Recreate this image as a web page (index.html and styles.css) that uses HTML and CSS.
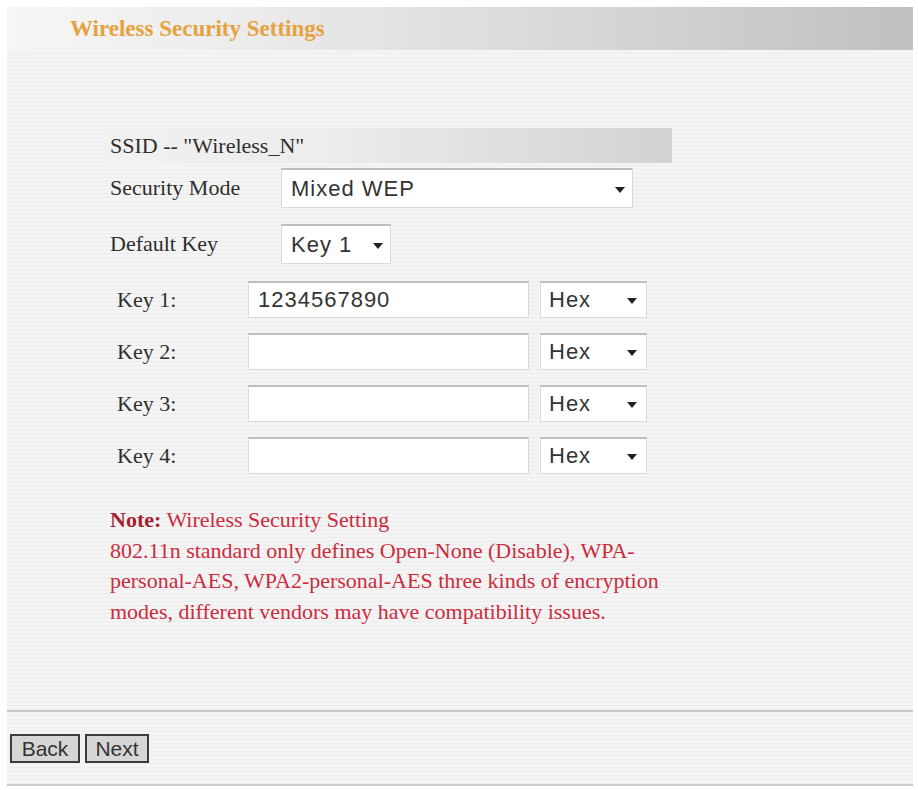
FILE: index.html
```html
<!DOCTYPE html>
<html>
<head>
<meta charset="utf-8">
<title>Wireless Security Settings</title>
<link rel="stylesheet" href="styles.css">
</head>
<body>
<div class="page">
  <div class="header"><span class="title">Wireless Security Settings</span></div>
  <div class="content">
    <div class="form">
      <div class="ssid">SSID -- "Wireless_N"</div>
      <div class="row row-mode">
        <span class="label label-wide">Security Mode</span>
        <div class="select select-mode"><span class="sel-text">Mixed WEP</span><svg class="arrow" width="10" height="6" viewBox="0 0 10 6"><path d="M0 0H10L5 6Z"/></svg></div>
      </div>
      <div class="row row-default">
        <span class="label label-wide">Default Key</span>
        <div class="select select-key"><span class="sel-text">Key 1</span><svg class="arrow" width="10" height="6" viewBox="0 0 10 6"><path d="M0 0H10L5 6Z"/></svg></div>
      </div>
      <div class="keys">
        <div class="key-row">
          <span class="label label-key">Key 1:</span>
          <input class="key-input" type="text" value="1234567890">
          <div class="select select-hex"><span class="sel-text">Hex</span><svg class="arrow" width="10" height="6" viewBox="0 0 10 6"><path d="M0 0H10L5 6Z"/></svg></div>
        </div>
        <div class="key-row">
          <span class="label label-key">Key 2:</span>
          <input class="key-input" type="text" value="">
          <div class="select select-hex"><span class="sel-text">Hex</span><svg class="arrow" width="10" height="6" viewBox="0 0 10 6"><path d="M0 0H10L5 6Z"/></svg></div>
        </div>
        <div class="key-row">
          <span class="label label-key">Key 3:</span>
          <input class="key-input" type="text" value="">
          <div class="select select-hex"><span class="sel-text">Hex</span><svg class="arrow" width="10" height="6" viewBox="0 0 10 6"><path d="M0 0H10L5 6Z"/></svg></div>
        </div>
        <div class="key-row">
          <span class="label label-key">Key 4:</span>
          <input class="key-input" type="text" value="">
          <div class="select select-hex"><span class="sel-text">Hex</span><svg class="arrow" width="10" height="6" viewBox="0 0 10 6"><path d="M0 0H10L5 6Z"/></svg></div>
        </div>
      </div>
      <div class="note">
        <b>Note:</b> Wireless Security Setting<br>
        802.11n standard only defines Open-None (Disable), WPA-<br>
        personal-AES, WPA2-personal-AES three kinds of encryption<br>
        modes, different vendors may have compatibility issues.
      </div>
    </div>
  </div>
  <div class="footer">
    <button class="btn btn-back">Back</button>
    <button class="btn btn-next">Next</button>
  </div>
</div>
</body>
</html>
```
FILE: styles.css
```css
html, body {
  margin: 0;
  padding: 0;
  background: #ffffff;
}

.page {
  margin: 7px 5px 0 7px;
  font-family: "Liberation Serif", "Times New Roman", serif;
  color: #2e2e2e;
}

.header {
  height: 43px;
  display: flex;
  align-items: center;
  padding-left: 63px;
  background: linear-gradient(to right, #f6f6f6 0%, #ececec 25%, #dcdcdc 55%, #c0c0c0 100%);
}

.title {
  font-size: 23px;
  font-weight: bold;
  color: #e6a23f;
  padding-top: 1px;
}

.content {
  height: 660px;
  box-sizing: border-box;
  padding: 78px 0 0 96px;
  background: repeating-linear-gradient(to bottom, #f4f4f4 0px, #f4f4f4 3px, #ededed 3px, #ededed 4px);
}

.ssid {
  width: 569px;
  height: 35px;
  box-sizing: border-box;
  padding-left: 7px;
  display: flex;
  align-items: center;
  font-size: 22px;
  background: linear-gradient(to right, #f1f1f1 0%, #ececec 40%, #d2d2d2 100%);
}

.row {
  display: flex;
  align-items: center;
  height: 40px;
  padding-left: 7px;
}

.row-mode { margin-top: 5px; }
.row-default { margin-top: 16px; }

.label {
  font-size: 22px;
  color: #2e2e2e;
}

.label-wide { width: 171px; flex: none; }

.select {
  display: flex;
  align-items: center;
  box-sizing: border-box;
  background: #ffffff;
  border: 1px solid #dadada;
  border-top: 2px solid #bdbdbd;
  font-family: "Liberation Sans", Arial, sans-serif;
  font-size: 22px;
  letter-spacing: 1px;
  color: #333333;
  padding: 0 9px 0 9px;
}

.sel-text { flex: 1; }

.arrow { fill: #222222; flex: none; margin-top: 2px; }

.select-mode { width: 352px; height: 40px; padding-right: 7px; }
.select-key { width: 110px; height: 40px; padding-right: 7px; }
.select-hex { width: 107px; height: 37px; padding-left: 8px; }

.keys {
  margin-top: 17px;
  padding-left: 14px;
  display: flex;
  flex-direction: column;
  gap: 15px;
}

.key-row {
  display: flex;
  align-items: center;
  height: 37px;
}

.label-key { width: 131px; flex: none; }

.key-input {
  width: 281px;
  height: 37px;
  box-sizing: border-box;
  margin: 0 11px 0 0;
  padding: 0 9px;
  background: #ffffff;
  border: 1px solid #dadada;
  border-top: 2px solid #bdbdbd;
  font-family: "Liberation Sans", Arial, sans-serif;
  font-size: 22px;
  letter-spacing: 1px;
  color: #333333;
  outline: none;
}

.note {
  margin-top: 31px;
  padding-left: 7px;
  font-size: 22px;
  line-height: 30.7px;
  color: #cc2b3c;
}

.note b { color: #a8212e; }

.footer {
  height: 76px;
  box-sizing: border-box;
  border-top: 2px solid #c6c6c6;
  border-bottom: 2px solid #cccccc;
  padding: 22px 0 0 3px;
  display: flex;
  align-items: flex-start;
  gap: 5px;
  background: repeating-linear-gradient(to bottom, #f4f4f4 0px, #f4f4f4 3px, #ededed 3px, #ededed 4px);
}

.btn {
  height: 29px;
  box-sizing: border-box;
  margin: 0;
  padding: 0 3px;
  background: #d6d6d6;
  border: 2px solid #3c3c3c;
  border-radius: 0;
  font-family: "Liberation Sans", Arial, sans-serif;
  font-size: 21px;
  color: #333333;
  line-height: 24px;
}

.btn-back { width: 70px; }
.btn-next { width: 64px; }
```
